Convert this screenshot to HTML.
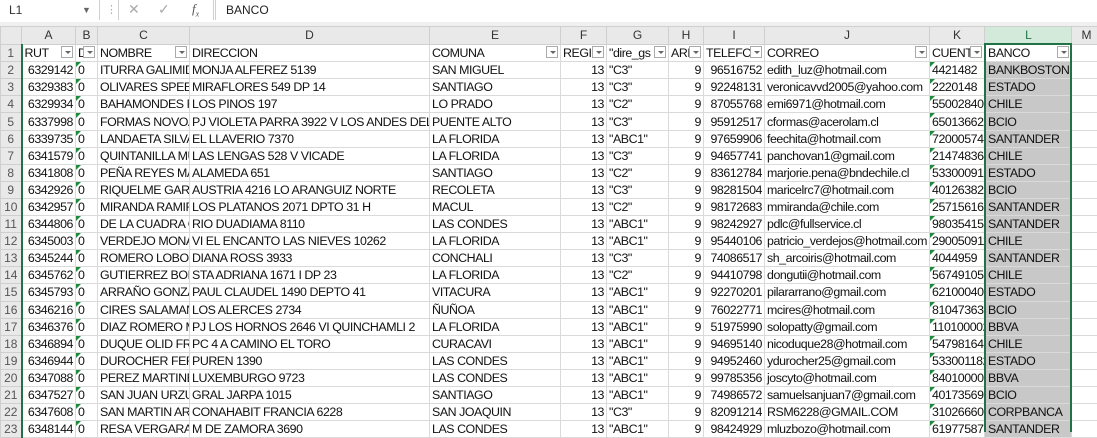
<!DOCTYPE html>
<html><head><meta charset="utf-8"><style>
body{margin:0;width:1097px;height:432px;overflow:hidden;background:#fff;font-family:"Liberation Sans",sans-serif;position:relative}
.fb{position:absolute;left:0;top:0;width:1097px;height:22px;background:#fff;border-bottom:1px solid #d6d6d6}
.gap{position:absolute;left:0;top:22px;width:1097px;height:5px;background:#f0f0f0}
.nb{position:absolute;left:0;top:0;width:100px;height:20px;border-right:1px solid #d0d0d0;font-size:12px;line-height:20px;padding-left:9px;box-sizing:border-box;color:#333}
table{position:absolute;left:0;top:26px;width:1101px;border-collapse:collapse;table-layout:fixed;font-size:12.4px;letter-spacing:-0.45px;color:#111}
td{height:16.1px;padding:0 2px;border:1px solid #dadada;white-space:nowrap;overflow:hidden;line-height:16px;position:relative}
tr.ch td{background:#e9e9e9;text-align:center;color:#333;border-color:#cfcfcf;font-size:12px;letter-spacing:0}
td.rn{background:#e9e9e9;text-align:center;color:#555;border-color:#cfcfcf;border-right:2px solid #217346;font-size:12px;padding:0;letter-spacing:0}
td.r{text-align:right}
td.L{background:#c8c8c8;padding-left:3px}
tr.ch td.L{background:#d3eadb;border-bottom:2px solid #217346;color:#217346}
.dd{position:absolute;right:2px;top:1px;width:12px;height:12px;border:1px solid #aaa;background:#fff;box-sizing:border-box}
.dd:after{content:"";position:absolute;left:3px;top:4px;border-left:3px solid transparent;border-right:3px solid transparent;border-top:3px solid #666}
.t{position:absolute;left:0;top:0;border-right:5px solid transparent;border-top:5px solid #1e8a3c;width:0;height:0}
</style></head><body>
<div class="fb"><div class="nb">L1 <span style="position:absolute;left:82px;font-size:9px;color:#666">▼</span></div>
<span style="position:absolute;left:106px;top:3px;color:#aaa;font-size:11px">⋮</span>
<div style="position:absolute;left:118px;top:0;width:94px;height:20px;border-right:1px solid #d0d0d0;border-left:1px solid #d0d0d0"></div>
<span style="position:absolute;left:128px;top:1px;color:#aaa;font-size:14px">✕</span>
<span style="position:absolute;left:158px;top:1px;color:#aaa;font-size:14px">✓</span>
<span style="position:absolute;left:192px;top:1px;color:#555;font-size:13px;font-style:italic;font-family:'Liberation Serif',serif">f<sub style="font-size:8px">x</sub></span>
<div style="position:absolute;left:215px;top:0;width:1px;height:20px;background:#d0d0d0"></div>
<span style="position:absolute;left:226px;top:3px;font-size:12px;color:#222">BANCO</span></div>
<div class="gap"></div>
<table>
<colgroup><col style="width:21px"><col style="width:54px"><col style="width:22px"><col style="width:92px"><col style="width:240px"><col style="width:131px"><col style="width:46px"><col style="width:62px"><col style="width:35px"><col style="width:61px"><col style="width:165px"><col style="width:55px"><col style="width:87px"><col style="width:30px"></colgroup>
<tr class="ch"><td style="border-right:1px solid #cfcfcf"></td><td>A</td><td>B</td><td>C</td><td>D</td><td>E</td><td>F</td><td>G</td><td>H</td><td>I</td><td>J</td><td>K</td><td class="L">L</td><td>M</td></tr>
<tr><td class="rn">1</td><td>RUT<i class="dd"></i></td><td>D<i class="dd"></i></td><td>NOMBRE<i class="dd"></i></td><td>DIRECCION</td><td>COMUNA<i class="dd"></i></td><td>REGIC<i class="dd"></i></td><td>"dire_gs<i class="dd"></i></td><td>ARE<i class="dd"></i></td><td>TELEFON<i class="dd"></i></td><td>CORREO<i class="dd"></i></td><td>CUENTA<i class="dd"></i></td><td class="L" style="background:#fff">BANCO<i class="dd"></i></td><td></td></tr>
<tr><td class="rn">2</td><td class="r">6329142</td><td><i class="t"></i>0</td><td>ITURRA GALIMIDI</td><td>MONJA ALFEREZ 5139</td><td>SAN MIGUEL</td><td class="r">13</td><td>"C3"</td><td class="r">9</td><td class="r">96516752</td><td>edith_luz@hotmail.com</td><td><i class="t"></i>4421482</td><td class="L">BANKBOSTON</td><td></td></tr>
<tr><td class="rn">3</td><td class="r">6329383</td><td><i class="t"></i>0</td><td>OLIVARES SPEER</td><td>MIRAFLORES 549 DP 14</td><td>SANTIAGO</td><td class="r">13</td><td>"C3"</td><td class="r">9</td><td class="r">92248131</td><td>veronicavvd2005@yahoo.com</td><td><i class="t"></i>2220148</td><td class="L">ESTADO</td><td></td></tr>
<tr><td class="rn">4</td><td class="r">6329934</td><td><i class="t"></i>0</td><td>BAHAMONDES FU</td><td>LOS PINOS 197</td><td>LO PRADO</td><td class="r">13</td><td>"C2"</td><td class="r">9</td><td class="r">87055768</td><td>emi6971@hotmail.com</td><td><i class="t"></i>550028406</td><td class="L">CHILE</td><td></td></tr>
<tr><td class="rn">5</td><td class="r">6337998</td><td><i class="t"></i>0</td><td>FORMAS NOVOA</td><td>PJ VIOLETA PARRA 3922 V LOS ANDES DEL SU</td><td>PUENTE ALTO</td><td class="r">13</td><td>"C3"</td><td class="r">9</td><td class="r">95912517</td><td>cformas@acerolam.cl</td><td><i class="t"></i>65013662</td><td class="L">BCIO</td><td></td></tr>
<tr><td class="rn">6</td><td class="r">6339735</td><td><i class="t"></i>0</td><td>LANDAETA SILVA</td><td>EL LLAVERIO 7370</td><td>LA FLORIDA</td><td class="r">13</td><td>"ABC1"</td><td class="r">9</td><td class="r">97659906</td><td>feechita@hotmail.com</td><td><i class="t"></i>72000574</td><td class="L">SANTANDER</td><td></td></tr>
<tr><td class="rn">7</td><td class="r">6341579</td><td><i class="t"></i>0</td><td>QUINTANILLA MU</td><td>LAS LENGAS 528 V VICADE</td><td>LA FLORIDA</td><td class="r">13</td><td>"C3"</td><td class="r">9</td><td class="r">94657741</td><td>panchovan1@gmail.com</td><td><i class="t"></i>214748364</td><td class="L">CHILE</td><td></td></tr>
<tr><td class="rn">8</td><td class="r">6341808</td><td><i class="t"></i>0</td><td>PEÑA REYES MAR</td><td>ALAMEDA 651</td><td>SANTIAGO</td><td class="r">13</td><td>"C2"</td><td class="r">9</td><td class="r">83612784</td><td>marjorie.pena@bndechile.cl</td><td><i class="t"></i>533000917</td><td class="L">ESTADO</td><td></td></tr>
<tr><td class="rn">9</td><td class="r">6342926</td><td><i class="t"></i>0</td><td>RIQUELME GARRI</td><td>AUSTRIA 4216 LO ARANGUIZ NORTE</td><td>RECOLETA</td><td class="r">13</td><td>"C3"</td><td class="r">9</td><td class="r">98281504</td><td>maricelrc7@hotmail.com</td><td><i class="t"></i>40126382</td><td class="L">BCIO</td><td></td></tr>
<tr><td class="rn">10</td><td class="r">6342957</td><td><i class="t"></i>0</td><td>MIRANDA RAMIR</td><td>LOS PLATANOS 2071 DPTO 31 H</td><td>MACUL</td><td class="r">13</td><td>"C2"</td><td class="r">9</td><td class="r">98172683</td><td>mmiranda@chile.com</td><td><i class="t"></i>25715616</td><td class="L">SANTANDER</td><td></td></tr>
<tr><td class="rn">11</td><td class="r">6344806</td><td><i class="t"></i>0</td><td>DE LA CUADRA G</td><td>RIO DUADIAMA 8110</td><td>LAS CONDES</td><td class="r">13</td><td>"ABC1"</td><td class="r">9</td><td class="r">98242927</td><td>pdlc@fullservice.cl</td><td><i class="t"></i>980354156</td><td class="L">SANTANDER</td><td></td></tr>
<tr><td class="rn">12</td><td class="r">6345003</td><td><i class="t"></i>0</td><td>VERDEJO MONAF</td><td>VI EL ENCANTO LAS NIEVES 10262</td><td>LA FLORIDA</td><td class="r">13</td><td>"ABC1"</td><td class="r">9</td><td class="r">95440106</td><td>patricio_verdejos@hotmail.com</td><td><i class="t"></i>290050911</td><td class="L">CHILE</td><td></td></tr>
<tr><td class="rn">13</td><td class="r">6345244</td><td><i class="t"></i>0</td><td>ROMERO LOBOS I</td><td>DIANA ROSS 3933</td><td>CONCHALI</td><td class="r">13</td><td>"C3"</td><td class="r">9</td><td class="r">74086517</td><td>sh_arcoiris@hotmail.com</td><td><i class="t"></i>4044959</td><td class="L">SANTANDER</td><td></td></tr>
<tr><td class="rn">14</td><td class="r">6345762</td><td><i class="t"></i>0</td><td>GUTIERREZ BOILE</td><td>STA ADRIANA 1671 I DP 23</td><td>LA FLORIDA</td><td class="r">13</td><td>"C2"</td><td class="r">9</td><td class="r">94410798</td><td>dongutii@hotmail.com</td><td><i class="t"></i>567491050</td><td class="L">CHILE</td><td></td></tr>
<tr><td class="rn">15</td><td class="r">6345793</td><td><i class="t"></i>0</td><td>ARRAÑO GONZAL</td><td>PAUL CLAUDEL 1490 DEPTO 41</td><td>VITACURA</td><td class="r">13</td><td>"ABC1"</td><td class="r">9</td><td class="r">92270201</td><td>pilararrano@gmail.com</td><td><i class="t"></i>621000401</td><td class="L">ESTADO</td><td></td></tr>
<tr><td class="rn">16</td><td class="r">6346216</td><td><i class="t"></i>0</td><td>CIRES SALAMANC</td><td>LOS ALERCES 2734</td><td>ÑUÑOA</td><td class="r">13</td><td>"ABC1"</td><td class="r">9</td><td class="r">76022771</td><td>mcires@hotmail.com</td><td><i class="t"></i>81047363</td><td class="L">BCIO</td><td></td></tr>
<tr><td class="rn">17</td><td class="r">6346376</td><td><i class="t"></i>0</td><td>DIAZ ROMERO M</td><td>PJ LOS HORNOS 2646 VI QUINCHAMLI 2</td><td>LA FLORIDA</td><td class="r">13</td><td>"ABC1"</td><td class="r">9</td><td class="r">51975990</td><td>solopatty@gmail.com</td><td><i class="t"></i>110100002</td><td class="L">BBVA</td><td></td></tr>
<tr><td class="rn">18</td><td class="r">6346894</td><td><i class="t"></i>0</td><td>DUQUE OLID FRA</td><td>PC 4 A CAMINO EL TORO</td><td>CURACAVI</td><td class="r">13</td><td>"ABC1"</td><td class="r">9</td><td class="r">94695140</td><td>nicoduque28@hotmail.com</td><td><i class="t"></i>547981643</td><td class="L">CHILE</td><td></td></tr>
<tr><td class="rn">19</td><td class="r">6346944</td><td><i class="t"></i>0</td><td>DUROCHER FERRI</td><td>PUREN 1390</td><td>LAS CONDES</td><td class="r">13</td><td>"ABC1"</td><td class="r">9</td><td class="r">94952460</td><td>ydurocher25@gmail.com</td><td><i class="t"></i>533001182</td><td class="L">ESTADO</td><td></td></tr>
<tr><td class="rn">20</td><td class="r">6347088</td><td><i class="t"></i>0</td><td>PEREZ MARTINEZ</td><td>LUXEMBURGO 9723</td><td>LAS CONDES</td><td class="r">13</td><td>"ABC1"</td><td class="r">9</td><td class="r">99785356</td><td>joscyto@hotmail.com</td><td><i class="t"></i>840100001</td><td class="L">BBVA</td><td></td></tr>
<tr><td class="rn">21</td><td class="r">6347527</td><td><i class="t"></i>0</td><td>SAN JUAN URZUA</td><td>GRAL JARPA 1015</td><td>SANTIAGO</td><td class="r">13</td><td>"ABC1"</td><td class="r">9</td><td class="r">74986572</td><td>samuelsanjuan7@gmail.com</td><td><i class="t"></i>40173569</td><td class="L">BCIO</td><td></td></tr>
<tr><td class="rn">22</td><td class="r">6347608</td><td><i class="t"></i>0</td><td>SAN MARTIN ARA</td><td>CONAHABIT FRANCIA 6228</td><td>SAN JOAQUIN</td><td class="r">13</td><td>"C3"</td><td class="r">9</td><td class="r">82091214</td><td>RSM6228@GMAIL.COM</td><td><i class="t"></i>31026660</td><td class="L">CORPBANCA</td><td></td></tr>
<tr><td class="rn">23</td><td class="r">6348144</td><td><i class="t"></i>0</td><td>RESA VERGARA N</td><td>M DE ZAMORA 3690</td><td>LAS CONDES</td><td class="r">13</td><td>"ABC1"</td><td class="r">9</td><td class="r">98424929</td><td>mluzbozo@hotmail.com</td><td><i class="t"></i>61977587</td><td class="L">SANTANDER</td><td></td></tr>
</table>
<div style="position:absolute;left:984px;top:43px;width:2px;height:389px;background:#217346"></div>
<div style="position:absolute;left:1070px;top:43px;width:2px;height:389px;background:#217346"></div>
</body></html>
